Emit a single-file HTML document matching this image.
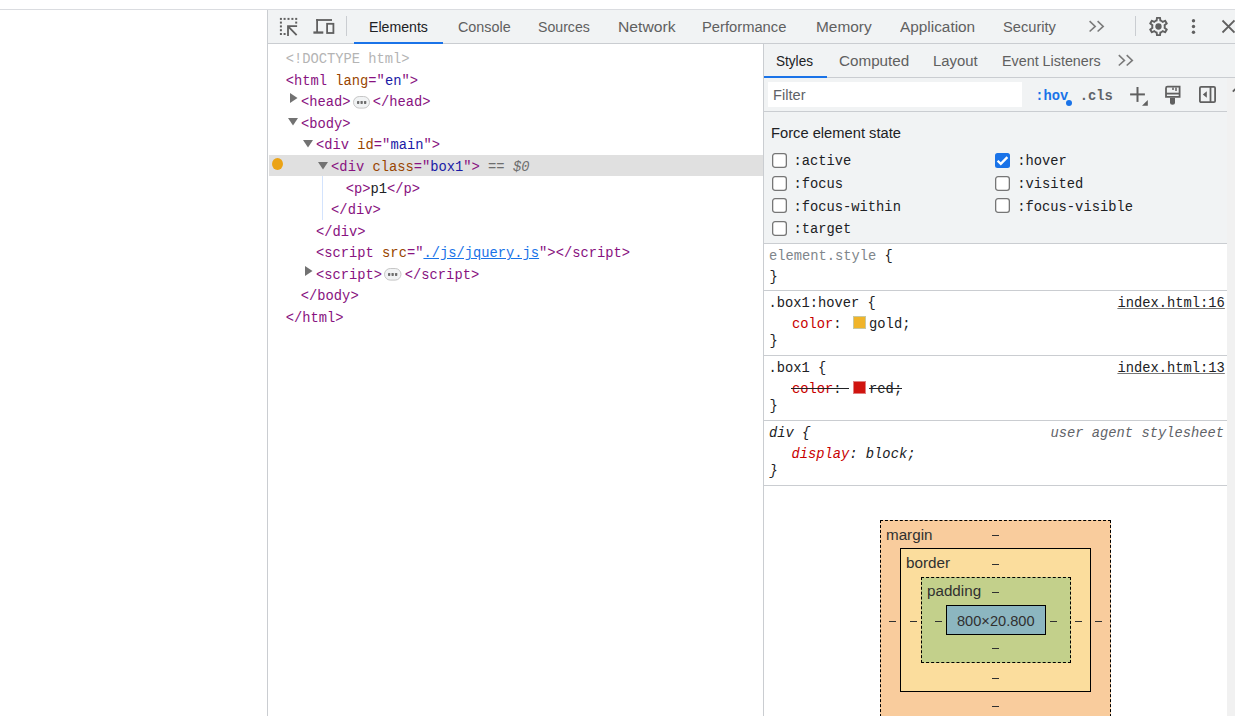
<!DOCTYPE html>
<html><head><meta charset="utf-8"><style>
html,body{margin:0;padding:0;}
body{width:1235px;height:716px;overflow:hidden;position:relative;background:#fff;font-family:"Liberation Sans",sans-serif;}
body>div,body>svg{position:absolute;}
.t{white-space:pre;line-height:0;}
.s{letter-spacing:-0.33px}
.pill{display:inline-block;width:15px;height:11px;border:1px solid #c6c6c6;border-radius:7px;background:#f1f3f4;vertical-align:-1px;margin:0 2.6px 0 2.4px;position:relative;top:-4px;box-sizing:content-box;text-align:center;line-height:11px}
.pill i{display:inline-block;width:3px;height:3px;background:#5f6368;margin:0 0.6px;vertical-align:middle}
</style></head><body>
<div style="left:0px;top:9px;width:1235px;height:1px;background:#dadce0"></div>
<div style="left:267px;top:10px;width:1px;height:706px;background:#cacdd1"></div>
<div style="left:268px;top:10px;width:967px;height:33px;background:#f1f3f4"></div>
<div style="left:268px;top:43px;width:967px;height:1px;background:#cacdd1"></div>
<svg style="left:274px;top:14px" width="30" height="26" viewBox="0 0 30 26" fill="#606060"><rect x="5.90" y="3.90" width="2" height="2"/><rect x="9.60" y="3.90" width="2" height="2"/><rect x="13.50" y="3.90" width="2" height="2"/><rect x="17.40" y="3.90" width="2" height="2"/><rect x="21.20" y="3.90" width="2" height="2"/><rect x="5.90" y="7.60" width="2" height="2"/><rect x="21.20" y="7.60" width="2" height="2"/><rect x="5.90" y="11.40" width="2" height="2"/><rect x="5.90" y="15.20" width="2" height="2"/><rect x="5.90" y="19.00" width="2" height="2"/><rect x="9.60" y="19.00" width="2" height="2"/>
<path d="M13.1 11.3h10v1.8h-7.1l7.3 7.3-1.3 1.3-7.1-7.1v7.3h-1.8z"/></svg>
<svg style="left:308px;top:14px" width="32" height="26" viewBox="0 0 32 26" fill="#606060">
<rect x="8.2" y="5.1" width="15.8" height="1.8"/><rect x="8.2" y="5.1" width="1.8" height="13"/>
<rect x="5.4" y="17.4" width="9.9" height="2.3"/>
<rect x="19.1" y="9.8" width="6.3" height="9.2" fill="none" stroke="#606060" stroke-width="1.8"/></svg>
<div style="left:346px;top:16px;width:1px;height:20px;background:#cacdd1"></div>
<div class="t" style="left:368.70px;top:26.93px;font-family:'Liberation Sans', sans-serif;font-size:15.5px;color:#202124;transform-origin:0 0;transform:scaleX(0.9123)">Elements</div>
<div class="t" style="left:457.70px;top:26.93px;font-family:'Liberation Sans', sans-serif;font-size:15.5px;color:#606060;transform-origin:0 0;transform:scaleX(0.9267)">Console</div>
<div class="t" style="left:537.50px;top:26.93px;font-family:'Liberation Sans', sans-serif;font-size:15.5px;color:#606060;transform-origin:0 0;transform:scaleX(0.9115)">Sources</div>
<div class="t" style="left:617.50px;top:26.93px;font-family:'Liberation Sans', sans-serif;font-size:15.5px;color:#606060;transform-origin:0 0;transform:scaleX(1.0115)">Network</div>
<div class="t" style="left:702.30px;top:26.93px;font-family:'Liberation Sans', sans-serif;font-size:15.5px;color:#606060;transform-origin:0 0;transform:scaleX(0.9508)">Performance</div>
<div class="t" style="left:815.70px;top:26.93px;font-family:'Liberation Sans', sans-serif;font-size:15.5px;color:#606060;transform-origin:0 0;transform:scaleX(0.9943)">Memory</div>
<div class="t" style="left:900.00px;top:26.93px;font-family:'Liberation Sans', sans-serif;font-size:15.5px;color:#606060;transform-origin:0 0;transform:scaleX(0.9911)">Application</div>
<div class="t" style="left:1002.70px;top:26.93px;font-family:'Liberation Sans', sans-serif;font-size:15.5px;color:#606060;transform-origin:0 0;transform:scaleX(0.9452)">Security</div>
<div style="left:354px;top:42px;width:89px;height:2px;background:#1a73e8"></div>
<svg style="left:1086px;top:18px" width="20" height="16" viewBox="0 0 20 16" fill="none" stroke="#7b7b7b" stroke-width="1.6">
<path d="M3.6 3.2L9.2 8.4L3.6 13.5M11.6 3.2L17.2 8.4L11.6 13.5"/></svg>
<div style="left:1135px;top:16px;width:1px;height:20px;background:#cacdd1"></div>
<svg style="left:1147px;top:14.9px" width="23" height="23" viewBox="0 0 24 24" fill="#606060">
<path d="M19.43 12.98c.04-.32.07-.64.07-.98s-.03-.66-.07-.98l2.11-1.65c.19-.15.24-.42.12-.64l-2-3.46c-.12-.22-.39-.3-.61-.22l-2.49 1c-.52-.4-1.08-.73-1.69-.98l-.38-2.65C14.46 2.18 14.25 2 14 2h-4c-.25 0-.46.18-.49.42l-.38 2.65c-.61.25-1.17.59-1.69.98l-2.49-1c-.23-.09-.49 0-.61.22l-2 3.46c-.13.22-.07.49.12.64l2.11 1.65c-.04.32-.07.65-.07.98s.03.66.07.98l-2.11 1.65c-.19.15-.24.42-.12.64l2 3.46c.12.22.39.3.61.22l2.49-1c.52.4 1.08.73 1.69.98l.38 2.65c.03.24.24.42.49.42h4c.25 0 .46-.18.49-.42l.38-2.65c.61-.25 1.17-.59 1.69-.98l2.49 1c.23.09.49 0 .61-.22l2-3.46c.12-.22.07-.49-.12-.64l-2.110-1.65zM17.45 11.27c.04.31.05.52.05.73 0 .21-.02.43-.05.73l-.14 1.13.89.7 1.08.84-.7 1.21-1.27-.51-1.04-.42-.9.68c-.43.32-.84.56-1.25.73l-1.06.43-.16 1.13-.2 1.35h-1.4l-.19-1.35-.16-1.13-1.06-.43c-.43-.18-.83-.41-1.23-.71l-.91-.7-1.06.43-1.27.51-.7-1.21 1.08-.84.89-.7-.14-1.13c-.03-.31-.05-.54-.05-.74s.02-.43.05-.73l.14-1.13-.89-.7-1.08-.84.7-1.21 1.27.51 1.04.42.9-.68c.43-.32.84-.56 1.25-.73l1.06-.43.16-1.13.2-1.35h1.39l.19 1.35.16 1.13 1.06.43c.43.18.83.41 1.23.71l.91.7 1.06-.43 1.270-.51.7 1.21-1.07.85-.89.7.14 1.13z"/>
<circle cx="12" cy="12" r="3.3"/></svg>
<svg style="left:1188px;top:16px" width="12" height="22" viewBox="0 0 12 22" fill="#606060">
<circle cx="5.5" cy="4.8" r="1.7"/><circle cx="5.5" cy="10.5" r="1.7"/><circle cx="5.5" cy="16.2" r="1.7"/></svg>
<svg style="left:1218px;top:17px" width="20" height="20" viewBox="0 0 20 20" fill="none" stroke="#606060" stroke-width="1.8">
<path d="M4.5 3.5l12 12M16.5 3.5l-12 12"/></svg>
<div style="left:268px;top:44px;width:495px;height:672px;background:#fff"></div>
<div style="left:269px;top:155px;width:494px;height:21px;background:#e0e0e0"></div>
<div style="left:272px;top:158px;width:11px;height:12px;border-radius:50%;background:#eba315"></div>
<div style="left:322px;top:176px;width:1px;height:44px;background:#d3e3fd"></div>
<div class="t" style="left:285.72px;top:60.03px;font-family:'Liberation Mono', monospace;font-size:13.78px;color:#202124;"><span style="color:#b4b4b4">&lt;!DOCTYPE html&gt;</span></div>
<div class="t" style="left:285.72px;top:81.61px;font-family:'Liberation Mono', monospace;font-size:13.78px;color:#202124;"><span style="color:#881280">&lt;html </span><span style="color:#994500">lang</span><span style="color:#881280">="</span><span style="color:#1a1aa6">en</span><span style="color:#881280">"&gt;</span></div>
<div class="t" style="left:301.02px;top:103.19px;font-family:'Liberation Mono', monospace;font-size:13.78px;color:#202124;"><span style="color:#881280">&lt;head&gt;</span></div>
<div class="t" style="left:301.02px;top:124.77px;font-family:'Liberation Mono', monospace;font-size:13.78px;color:#202124;"><span style="color:#881280">&lt;body&gt;</span></div>
<div class="t" style="left:316.02px;top:146.35px;font-family:'Liberation Mono', monospace;font-size:13.78px;color:#202124;"><span style="color:#881280">&lt;div </span><span style="color:#994500">id</span><span style="color:#881280">="</span><span style="color:#1a1aa6">main</span><span style="color:#881280">"&gt;</span></div>
<div class="t" style="left:331.12px;top:167.93px;font-family:'Liberation Mono', monospace;font-size:13.78px;color:#202124;"><span style="color:#881280">&lt;div </span><span style="color:#994500">class</span><span style="color:#881280">="</span><span style="color:#1a1aa6">box1</span><span style="color:#881280">"&gt;</span><span style="color:#6e6e6e"> == <i>$0</i></span></div>
<div class="t" style="left:345.72px;top:189.51px;font-family:'Liberation Mono', monospace;font-size:13.78px;color:#202124;"><span style="color:#881280">&lt;p&gt;</span><span style="color:#202124">p1</span><span style="color:#881280">&lt;/p&gt;</span></div>
<div class="t" style="left:331.12px;top:211.09px;font-family:'Liberation Mono', monospace;font-size:13.78px;color:#202124;"><span style="color:#881280">&lt;/div&gt;</span></div>
<div class="t" style="left:316.02px;top:232.67px;font-family:'Liberation Mono', monospace;font-size:13.78px;color:#202124;"><span style="color:#881280">&lt;/div&gt;</span></div>
<div class="t" style="left:316.02px;top:254.25px;font-family:'Liberation Mono', monospace;font-size:13.78px;color:#202124;"><span style="color:#881280">&lt;script </span><span style="color:#994500">src</span><span style="color:#881280">="</span><span style="color:#1a73e8;text-decoration:underline">./js/jquery.js</span><span style="color:#881280">"&gt;</span><span style="color:#881280">&lt;/script&gt;</span></div>
<div class="t" style="left:316.02px;top:275.83px;font-family:'Liberation Mono', monospace;font-size:13.78px;color:#202124;"><span style="color:#881280">&lt;script&gt;</span></div>
<div class="t" style="left:300.82px;top:297.41px;font-family:'Liberation Mono', monospace;font-size:13.78px;color:#202124;"><span style="color:#881280">&lt;/body&gt;</span></div>
<div class="t" style="left:285.72px;top:318.99px;font-family:'Liberation Mono', monospace;font-size:13.78px;color:#202124;"><span style="color:#881280">&lt;/html&gt;</span></div>
<div class="t" style="left:372.72px;top:103.19px;font-family:'Liberation Mono', monospace;font-size:13.78px;color:#202124;"><span style="color:#881280">&lt;/head&gt;</span></div>
<div class="t" style="left:404.82px;top:275.83px;font-family:'Liberation Mono', monospace;font-size:13.78px;color:#202124;"><span style="color:#881280">&lt;/script&gt;</span></div>
<svg style="left:353px;top:96.1px" width="17" height="12.6" viewBox="0 0 17 12.6"><rect x="0.5" y="0.5" width="16" height="11.6" rx="5.8" fill="#f1f3f4" stroke="#c6c6c6"/><rect x="4.0" y="4.9" width="2.3" height="3" rx="0.6" fill="#6e6e6e"/><rect x="7.5" y="4.9" width="2.3" height="3" rx="0.6" fill="#6e6e6e"/><rect x="11.0" y="4.9" width="2.3" height="3" rx="0.6" fill="#6e6e6e"/></svg>
<svg style="left:384.2px;top:268.3px" width="17.5" height="12.6" viewBox="0 0 17.5 12.6"><rect x="0.5" y="0.5" width="16.5" height="11.6" rx="5.8" fill="#f1f3f4" stroke="#c6c6c6"/><rect x="4.0" y="4.9" width="2.3" height="3" rx="0.6" fill="#6e6e6e"/><rect x="7.5" y="4.9" width="2.3" height="3" rx="0.6" fill="#6e6e6e"/><rect x="11.0" y="4.9" width="2.3" height="3" rx="0.6" fill="#6e6e6e"/></svg>
<svg style="left:290.00px;top:93.10px" width="8" height="10" viewBox="0 0 8 10"><path d="M0 0v10L7.5 5z" fill="#727272"/></svg>
<svg style="left:288.00px;top:118.20px" width="10" height="8" viewBox="0 0 10 8"><path d="M0 0h10L5 7.5z" fill="#727272"/></svg>
<svg style="left:302.90px;top:139.80px" width="10" height="8" viewBox="0 0 10 8"><path d="M0 0h10L5 7.5z" fill="#727272"/></svg>
<svg style="left:317.80px;top:161.60px" width="10" height="8" viewBox="0 0 10 8"><path d="M0 0h10L5 7.5z" fill="#727272"/></svg>
<svg style="left:305.10px;top:266.10px" width="8" height="10" viewBox="0 0 8 10"><path d="M0 0v10L7.5 5z" fill="#727272"/></svg>
<div style="left:763px;top:44px;width:1px;height:672px;background:#cacdd1"></div>
<div style="left:764px;top:44px;width:471px;height:33px;background:#f1f3f4"></div>
<div style="left:764px;top:77px;width:471px;height:1px;background:#cacdd1"></div>
<div class="t" style="left:776.30px;top:60.93px;font-family:'Liberation Sans', sans-serif;font-size:15.5px;color:#202124;transform-origin:0 0;transform:scaleX(0.8758)">Styles</div>
<div class="t" style="left:839.20px;top:60.93px;font-family:'Liberation Sans', sans-serif;font-size:15.5px;color:#606060;transform-origin:0 0;transform:scaleX(0.9820)">Computed</div>
<div class="t" style="left:933.20px;top:60.93px;font-family:'Liberation Sans', sans-serif;font-size:15.5px;color:#606060;transform-origin:0 0;transform:scaleX(0.9579)">Layout</div>
<div class="t" style="left:1001.50px;top:60.93px;font-family:'Liberation Sans', sans-serif;font-size:15.5px;color:#606060;transform-origin:0 0;transform:scaleX(0.9238)">Event Listeners</div>
<div style="left:764px;top:76px;width:63px;height:2px;background:#1a73e8"></div>
<svg style="left:1115px;top:52px" width="20" height="16" viewBox="0 0 20 16" fill="none" stroke="#7b7b7b" stroke-width="1.6">
<path d="M3.8 3.2L9.4 8.4L3.8 13.5M11.7 3.2L17.3 8.4L11.7 13.5"/></svg>
<div style="left:764px;top:78px;width:463px;height:33px;background:#f1f3f4"></div>
<div style="left:764px;top:111px;width:463px;height:1px;background:#cacdd1"></div>
<div style="left:768px;top:82px;width:254px;height:25px;background:#fff"></div>
<div class="t" style="left:773.10px;top:94.93px;font-family:'Liberation Sans', sans-serif;font-size:15.5px;color:#5f6368;transform-origin:0 0;transform:scaleX(0.9438)">Filter</div>
<div class="t" style="left:1035.20px;top:97.13px;font-family:'Liberation Mono', monospace;font-size:13.78px;color:#1a73e8;font-weight:bold">:hov</div>
<div style="left:1066px;top:100.2px;width:6px;height:6px;border-radius:50%;background:#1a73e8"></div>
<div class="t" style="left:1079.70px;top:97.13px;font-family:'Liberation Mono', monospace;font-size:13.78px;color:#5f6368;font-weight:bold">.cls</div>
<svg style="left:1125px;top:80px" width="30" height="30" viewBox="0 0 30 30" fill="#606060">
<rect x="5.1" y="13.4" width="14.8" height="2"/><rect x="11.5" y="7" width="2" height="14.9"/>
<path d="M17 25.75L22.8 19.9V25.75z"/></svg>
<svg style="left:1160px;top:80px" width="26" height="30" viewBox="0 0 26 30" fill="none" stroke="#606060" stroke-width="1.8">
<path d="M7.5 6.7h12.1v10.1H6v-8.6a1.5 1.5 0 0 1 1.5-1.5z"/><path d="M6 13.6h13.6"/>
<path d="M13 7.5v2.5M16 7.5v3.5" stroke-width="1.5"/>
<path d="M10 17.7h5v4.6a2.5 2.5 0 0 1-5 0z" fill="#606060" stroke="none"/></svg>
<svg style="left:1195px;top:80px" width="26" height="28" viewBox="0 0 26 28" fill="none" stroke="#606060" stroke-width="1.8">
<rect x="4.9" y="6.9" width="15.2" height="15.3" rx="1.2"/><path d="M15.5 6.9v15.3"/>
<path d="M7.8 14.5l4-3.3v6.6z" fill="#606060" stroke="none"/></svg>
<div style="left:1227px;top:78px;width:8px;height:638px;background:#f1f1f1"></div>
<svg style="left:1230px;top:86px" width="5" height="8" viewBox="0 0 5 8"><path d="M2.8 5.6L5.5 3" fill="none" stroke="#606060" stroke-width="1.8"/></svg>
<div style="left:764px;top:112px;width:463px;height:131px;background:#f1f3f4"></div>
<div style="left:764px;top:243px;width:463px;height:1px;background:#cacdd1"></div>
<div class="t" style="left:771.40px;top:132.93px;font-family:'Liberation Sans', sans-serif;font-size:15.5px;color:#202124;transform-origin:0 0;transform:scaleX(0.9487)">Force element state</div>
<svg style="left:772.3px;top:153.1px" width="15" height="15" viewBox="0 0 15 15"><rect x="0.65" y="0.65" width="13.7" height="13.7" rx="2.4" fill="#fff" stroke="#767676" stroke-width="1.3"/></svg>
<div class="t" style="left:793.50px;top:162.13px;font-family:'Liberation Mono', monospace;font-size:13.78px;color:#202124;">:active</div>
<svg style="left:772.3px;top:176.3px" width="15" height="15" viewBox="0 0 15 15"><rect x="0.65" y="0.65" width="13.7" height="13.7" rx="2.4" fill="#fff" stroke="#767676" stroke-width="1.3"/></svg>
<div class="t" style="left:793.50px;top:185.33px;font-family:'Liberation Mono', monospace;font-size:13.78px;color:#202124;">:focus</div>
<svg style="left:772.3px;top:198.4px" width="15" height="15" viewBox="0 0 15 15"><rect x="0.65" y="0.65" width="13.7" height="13.7" rx="2.4" fill="#fff" stroke="#767676" stroke-width="1.3"/></svg>
<div class="t" style="left:793.50px;top:207.63px;font-family:'Liberation Mono', monospace;font-size:13.78px;color:#202124;">:focus-within</div>
<svg style="left:772.3px;top:221.1px" width="15" height="15" viewBox="0 0 15 15"><rect x="0.65" y="0.65" width="13.7" height="13.7" rx="2.4" fill="#fff" stroke="#767676" stroke-width="1.3"/></svg>
<div class="t" style="left:793.50px;top:230.33px;font-family:'Liberation Mono', monospace;font-size:13.78px;color:#202124;">:target</div>
<svg style="left:995.1px;top:153.1px" width="15" height="15" viewBox="0 0 15 15"><rect x="0" y="0" width="15" height="15" rx="2.5" fill="#1a73e8"/><path d="M2.6 7.7l3.2 3.2 6.6-6.8" fill="none" stroke="#fff" stroke-width="2.3"/></svg>
<div class="t" style="left:1017.30px;top:162.13px;font-family:'Liberation Mono', monospace;font-size:13.78px;color:#202124;">:hover</div>
<svg style="left:995.1px;top:176.3px" width="15" height="15" viewBox="0 0 15 15"><rect x="0.65" y="0.65" width="13.7" height="13.7" rx="2.4" fill="#fff" stroke="#767676" stroke-width="1.3"/></svg>
<div class="t" style="left:1017.30px;top:185.33px;font-family:'Liberation Mono', monospace;font-size:13.78px;color:#202124;">:visited</div>
<svg style="left:995.1px;top:198.4px" width="15" height="15" viewBox="0 0 15 15"><rect x="0.65" y="0.65" width="13.7" height="13.7" rx="2.4" fill="#fff" stroke="#767676" stroke-width="1.3"/></svg>
<div class="t" style="left:1017.30px;top:207.63px;font-family:'Liberation Mono', monospace;font-size:13.78px;color:#202124;">:focus-visible</div>
<div style="left:764px;top:244px;width:463px;height:472px;background:#fff"></div>
<div style="left:764px;top:290px;width:463px;height:1px;background:#cacdd1"></div>
<div style="left:764px;top:355px;width:463px;height:1px;background:#cacdd1"></div>
<div style="left:764px;top:420px;width:463px;height:1px;background:#cacdd1"></div>
<div style="left:764px;top:485px;width:463px;height:1px;background:#cacdd1"></div>
<div class="t" style="left:768.90px;top:256.93px;font-family:'Liberation Mono', monospace;font-size:13.78px;color:#202124;"><span style="color:#80868b">element.style</span> {</div>
<div class="t" style="left:769.40px;top:278.13px;font-family:'Liberation Mono', monospace;font-size:13.78px;color:#202124;">}</div>
<div class="t" style="left:768.40px;top:304.03px;font-family:'Liberation Mono', monospace;font-size:13.78px;color:#202124;">.box1:hover {</div>
<div class="t" style="left:792.00px;top:324.53px;font-family:'Liberation Mono', monospace;font-size:13.78px;color:#202124;"><span style="color:#c80000">color</span>:</div>
<div style="left:853px;top:316px;width:11px;height:11px;background:#f0b429;border:1px solid #c8c8a0"></div>
<div class="t" style="left:869.10px;top:324.53px;font-family:'Liberation Mono', monospace;font-size:13.78px;color:#202124;">gold;</div>
<div class="t" style="left:769.40px;top:342.43px;font-family:'Liberation Mono', monospace;font-size:13.78px;color:#202124;">}</div>
<div class="t" style="left:1224.80px;top:304.03px;font-family:'Liberation Mono', monospace;font-size:13.78px;color:#202124;transform:translateX(-100%)"><span style="text-decoration:underline;text-decoration-color:#777">index.html:16</span></div>
<div class="t" style="left:768.40px;top:369.13px;font-family:'Liberation Mono', monospace;font-size:13.78px;color:#202124;">.box1 {</div>
<div class="t" style="left:792.00px;top:390.13px;font-family:'Liberation Mono', monospace;font-size:13.78px;color:#202124;"><span style="color:#c80000">color</span>: </div>
<div style="left:853px;top:381px;width:11px;height:11px;background:#d0140f;border:1px solid #e08080"></div>
<div class="t" style="left:869.10px;top:390.13px;font-family:'Liberation Mono', monospace;font-size:13.78px;color:#202124;">red;</div>
<div style="left:791.2px;top:388px;width:57.8px;height:1.2px;background:#202124"></div>
<div style="left:869px;top:388px;width:32.8px;height:1.2px;background:#202124"></div>
<div class="t" style="left:769.40px;top:407.43px;font-family:'Liberation Mono', monospace;font-size:13.78px;color:#202124;">}</div>
<div class="t" style="left:1224.80px;top:369.13px;font-family:'Liberation Mono', monospace;font-size:13.78px;color:#202124;transform:translateX(-100%)"><span style="text-decoration:underline;text-decoration-color:#777">index.html:13</span></div>
<div class="t" style="left:768.90px;top:434.13px;font-family:'Liberation Mono', monospace;font-size:13.78px;color:#202124;font-style:italic">div {</div>
<div class="t" style="left:791.50px;top:455.13px;font-family:'Liberation Mono', monospace;font-size:13.78px;color:#202124;font-style:italic"><span style="color:#c80000">display</span>: block;</div>
<div class="t" style="left:769.40px;top:472.43px;font-family:'Liberation Mono', monospace;font-size:13.78px;color:#202124;font-style:italic">}</div>
<div class="t" style="left:1224.00px;top:434.13px;font-family:'Liberation Mono', monospace;font-size:13.78px;color:#5f6368;font-style:italic;transform:translateX(-100%)">user agent stylesheet</div>
<div style="left:880px;top:520px;width:229px;height:210px;background:#f9cc9d;border:1px dashed #000"></div>
<div style="left:900px;top:548px;width:189px;height:142px;background:#fbdd9d;border:1px solid #000"></div>
<div style="left:921px;top:577px;width:148px;height:84px;background:#c3d08b;border:1px dashed #000"></div>
<div style="left:946px;top:605px;width:98px;height:28px;background:#8cb6c0;border:1px solid #000"></div>
<div class="t" style="left:885.50px;top:534.63px;font-family:'Liberation Sans', sans-serif;font-size:15.5px;color:#303030;transform-origin:0 0;transform:scaleX(0.9806)">margin</div>
<div class="t" style="left:905.80px;top:563.13px;font-family:'Liberation Sans', sans-serif;font-size:15.5px;color:#303030;transform-origin:0 0;transform:scaleX(0.9843)">border</div>
<div class="t" style="left:926.50px;top:590.93px;font-family:'Liberation Sans', sans-serif;font-size:15.5px;color:#303030;transform-origin:0 0;transform:scaleX(0.9803)">padding</div>
<div class="t" style="left:957.20px;top:620.63px;font-family:'Liberation Sans', sans-serif;font-size:15.5px;color:#303030;transform-origin:0 0;transform:scaleX(0.9425)">800×20.800</div>
<div style="left:992.4000000000001px;top:534.8px;width:7px;height:1px;background:#303030"></div>
<div style="left:992.4000000000001px;top:563.5px;width:7px;height:1px;background:#303030"></div>
<div style="left:992.4000000000001px;top:591.5px;width:7px;height:1px;background:#303030"></div>
<div style="left:992.4000000000001px;top:648.2px;width:7px;height:1px;background:#303030"></div>
<div style="left:992.4000000000001px;top:677.5px;width:7px;height:1px;background:#303030"></div>
<div style="left:992.4000000000001px;top:705.5px;width:7px;height:1px;background:#303030"></div>
<div style="left:889.0px;top:620.8px;width:7px;height:1px;background:#303030"></div>
<div style="left:909.5px;top:620.8px;width:7px;height:1px;background:#303030"></div>
<div style="left:934.5px;top:620.8px;width:7px;height:1px;background:#303030"></div>
<div style="left:1050.1000000000001px;top:620.8px;width:7px;height:1px;background:#303030"></div>
<div style="left:1074.5px;top:620.8px;width:7px;height:1px;background:#303030"></div>
<div style="left:1095.0px;top:620.8px;width:7px;height:1px;background:#303030"></div>
</body></html>
